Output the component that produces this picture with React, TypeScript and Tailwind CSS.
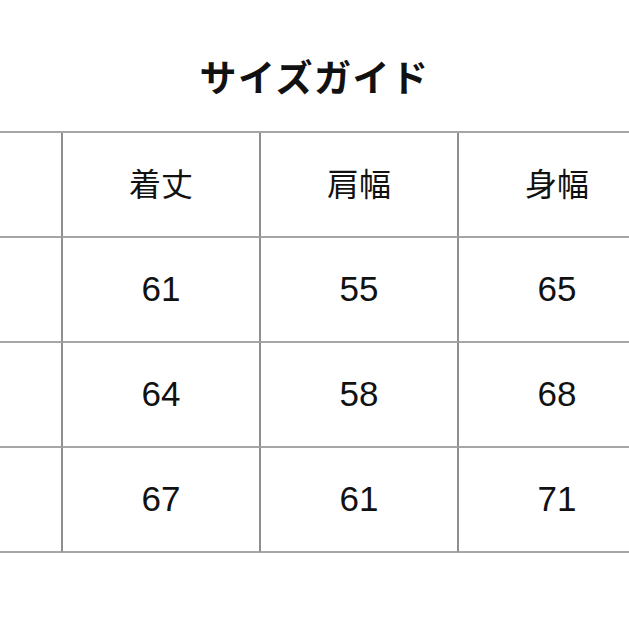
const headers = ["", "着丈", "肩幅", "身幅"]

const rows = [
  ["", "61", "55", "65"],
  ["", "64", "58", "68"],
  ["", "67", "61", "71"],
]

export default function App() {
  return (
    <div
      className="w-[629px] h-[629px] overflow-hidden bg-white text-[#111]"
      style={{ fontFamily: '"Liberation Sans", "Noto Sans CJK JP", sans-serif' }}
    >
      {/* Title */}
      <div className="pt-[58px] h-[131px] flex justify-center">
        <h1
          className="text-[37px] leading-none font-bold tracking-[1.5px]"
          style={{ fontFamily: '"Noto Sans CJK JP", sans-serif' }}
        >
          サイズガイド
        </h1>
      </div>

      {/* Table */}
      <div className="ml-[-135px] w-[792px] border-t-2 border-[#a6a6a6]">
        <div className="grid grid-cols-[198px_198px_198px_198px]">
          {headers.map((h, i) => (
            <div
              key={i}
              className="h-[105px] pb-[5px] flex items-center justify-center border-r-2 border-b-2 border-r-[#8f8f8f] border-b-[#a6a6a6] text-[32px]"
              style={{ fontFamily: '"Noto Sans CJK JP", sans-serif' }}
            >
              {h}
            </div>
          ))}
          {rows.map((r, ri) =>
            r.map((v, ci) => (
              <div
                key={`${ri}-${ci}`}
                className="h-[105px] flex items-center justify-center border-r-2 border-b-2 border-r-[#8f8f8f] border-b-[#a6a6a6] text-[35px]"
              >
                {v}
              </div>
            ))
          )}
        </div>
      </div>
    </div>
  )
}
